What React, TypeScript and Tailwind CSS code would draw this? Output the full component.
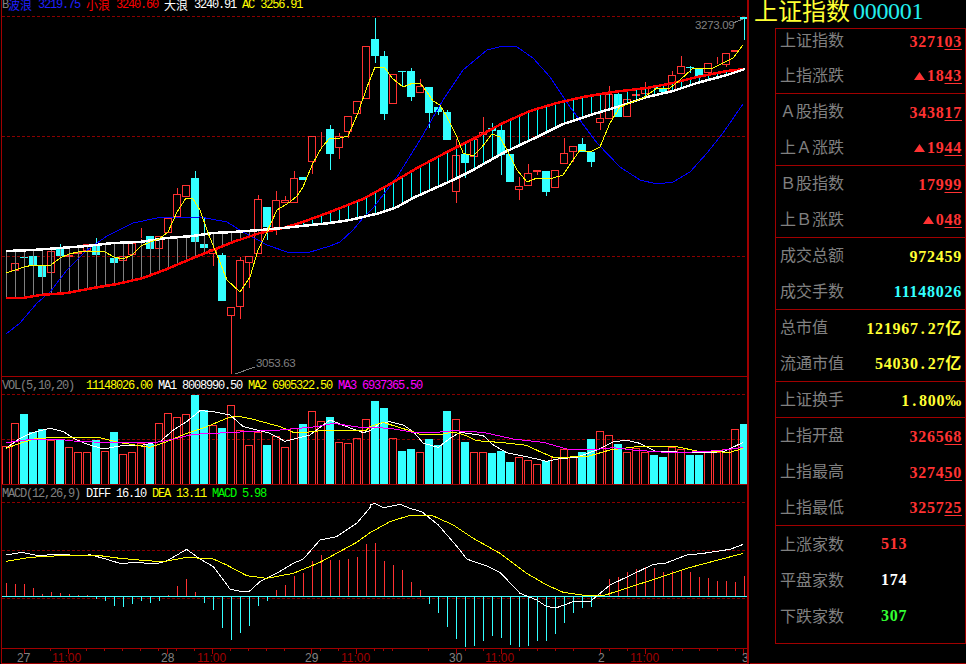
const UP = "#ff3232";
const DOWN = "#33ffff";
const GRID = "#8a0000";

type Pt = [number, number];
type Candle = { top: number; bot: number; wt?: number; wb?: number; down?: boolean };

const colX = (i: number) => 6 + 9 * i;

const r = (top: number, bot: number, wt?: number, wb?: number): Candle => ({ top, bot, wt, wb });
const c = (top: number, bot: number, wt?: number, wb?: number): Candle => ({ top, bot, wt, wb, down: true });

const candles: Candle[] = [
  r(271, 272), r(263, 271), c(257, 258), c(256, 265), c(265, 277), r(251, 273), c(249, 256, 244), r(255, 257), r(252, 254), r(244, 251),
  c(244, 255, 238), r(255, 256), c(258, 263), r(256, 261), r(243, 255), r(238, 239, 228, 240), c(236, 249), r(236, 249), r(218, 233), r(194, 217, 188),
  r(185, 197), c(178, 242, 171), c(244, 248, 217), r(249, 254, 249, 266), c(255, 301, 253), r(307, 316, 307, 374), r(260, 307, 257, 319), r(256, 263, 256, 288), r(199, 254, 195), c(207, 227, 207, 240),
  r(200, 228, 191, 235), r(200, 203, 196), r(178, 203, 171), c(177, 180), r(136, 162, 136, 174), r(131, 132, 131, 148), c(129, 154, 125, 170), r(136, 148, 133, 159), r(116, 132, 116, 138), r(101, 114),
  r(46, 99), c(39, 56, 18, 63), c(56, 114, 51, 120), r(74, 104), c(71, 72, 71, 87), c(71, 97, 68, 101), r(86, 93, 79), c(87, 113, 87, 128), c(107, 112, 107, 115), c(112, 140, 110),
  r(155, 192, 139, 203), c(154, 163, 154, 178), r(139, 157, 139, 169), r(132, 135, 117, 147), c(128, 131, 123, 160), c(130, 155, 130, 175), c(154, 182), r(186, 190, 177, 200), r(173, 186, 164), r(170, 172, 170, 175),
  c(171, 192, 171, 196), r(170, 188), r(153, 164, 138), r(146, 152, 146, 162), c(144, 152, 138), c(152, 162, 152, 167), r(118, 123, 113, 130), r(94, 119, 86), c(94, 117), r(99, 117),
  r(94, 96), r(88, 94, 82), c(86, 88), c(88, 92), r(75, 91, 71), r(66, 74, 56), c(67, 68, 66, 73), c(68, 76), r(63, 73), r(64, 65, 57),
  r(53, 65, 53, 67), r(50, 52), c(17, 19, 17, 40),
];

const volTops = [
  446, 423, 414, 432, 429, 440, 439, 447, 452, 452, 440, 451, 432, 454, 452, 443, 444, 423, 413, 417, 414,
  395, 410, 425, 428, 405, 430, 445, 432, 445, 436, 447, 428, 424, 411, 421, 417, 442, 443, 438, 419,
  401, 408, 438, 451, 449, 452, 439, 445, 411, 419, 442, 452, 452, 453, 451, 462, 457, 460, 464, 461,
  457, 449, 457, 452, 439, 431, 435, 444, 452, 448, 452, 455, 457, 447, 449, 455, 455, 452, 452, 449, 429, 424,
];

const macdBars = [
  583, 584, 584, 588, 594, 592, 593, 594, 595, 595, 599, 601, 606, 607, 604, 601, 603, 601, 595, 586, 579,
  592, 603, 610, 628, 640, 633, 626, 606, 601, 590, 585, 576, 573, 561, 555, 560, 560, 559, 557, 544,
  543, 561, 565, 570, 582, 590, 604, 613, 627, 639, 647, 646, 641, 636, 638, 645, 647, 646, 641, 641,
  634, 623, 613, 608, 607, 593, 579, 577, 572, 569, 567, 568, 572, 571, 570, 572, 577, 578, 581, 581, 582, 576,
];

const whiteBand: Pt[] = [[6, 251], [33, 250], [60, 248], [87, 246], [113, 243], [140, 242], [167, 238], [193, 236], [213, 233], [233, 232], [260, 230], [283, 228], [330, 223], [350, 220], [380, 213], [397, 207], [413, 198], [453, 180], [473, 170], [503, 153], [537, 137], [563, 124], [597, 113], [617, 107], [647, 97], [673, 91], [697, 83], [727, 75], [745, 69]];
const redBand: Pt[] = [[6, 298], [23, 298], [40, 295], [67, 293], [93, 288], [117, 284], [143, 278], [167, 269], [193, 258], [213, 250], [233, 242], [260, 233], [283, 228], [300, 223], [330, 212], [363, 199], [390, 184], [417, 168], [447, 152], [477, 137], [503, 123], [530, 111], [557, 103], [583, 97], [613, 92], [647, 88], [673, 83], [697, 77], [727, 71], [745, 69]];
const blueWave: Pt[] = [[6, 334], [20, 323], [37, 303], [50, 292], [67, 270], [87, 250], [107, 236], [133, 223], [157, 218], [200, 217], [227, 222], [243, 232], [267, 245], [287, 252], [307, 253], [330, 246], [340, 242], [353, 230], [363, 218], [373, 208], [397, 177], [420, 140], [443, 100], [463, 70], [487, 50], [503, 46], [517, 47], [533, 58], [550, 77], [570, 107], [597, 143], [620, 167], [640, 180], [657, 184], [673, 182], [690, 172], [707, 153], [723, 133], [743, 104]];
const acLine: Pt[] = [[6, 273], [15, 270], [24, 267], [33, 265], [42, 266], [51, 265], [60, 258], [69, 254], [78, 252], [87, 251], [96, 251], [105, 252], [114, 257], [123, 259], [132, 255], [141, 246], [150, 242], [159, 239], [168, 232], [177, 212], [186, 198], [193, 199], [200, 210], [208, 233], [217, 255], [227, 280], [240, 292], [250, 277], [258, 250], [267, 232], [277, 210], [290, 202], [297, 196], [303, 187], [313, 163], [322, 147], [330, 138], [340, 138], [348, 136], [358, 113], [367, 87], [375, 67], [385, 68], [392, 78], [403, 87], [413, 83], [420, 83], [427, 92], [433, 101], [440, 105], [447, 117], [457, 137], [463, 153], [473, 156], [482, 147], [492, 134], [500, 137], [508, 152], [517, 170], [527, 182], [537, 178], [553, 178], [563, 175], [573, 160], [580, 150], [590, 152], [600, 147], [610, 123], [620, 107], [630, 103], [643, 98], [657, 88], [670, 88], [680, 80], [692, 69], [713, 68], [733, 58], [743, 45]];

// traced from 3x crops, left half and right half
const crop = (ox: number, oy: number, list: Pt[]): Pt[] => list.map(([x, y]) => [x / 3 + ox, y / 3 + oy]);

const volWhite = [...crop(0, 370, [[18, 235], [60, 205], [100, 187], [150, 175], [190, 185], [220, 205], [260, 222], [310, 237], [360, 228], [430, 225], [480, 215], [520, 180], [560, 155], [600, 122], [640, 125], [690, 135], [730, 170], [770, 180], [810, 190], [855, 214], [890, 205], [930, 195], [990, 150], [1040, 170], [1090, 188]]), ...crop(370, 370, [[0, 182], [30, 160], [60, 155], [100, 165], [130, 185], [160, 220], [205, 232], [240, 205], [270, 187], [340, 197], [370, 225], [410, 248], [470, 260], [530, 274], [570, 266], [620, 262], [680, 240], [730, 215], [770, 211], [810, 220], [860, 245], [920, 246], [1000, 248], [1060, 245], [1120, 217]])];
const volYellow = [...crop(0, 370, [[18, 235], [60, 220], [110, 205], [170, 203], [300, 203], [360, 218], [450, 232], [500, 215], [560, 190], [620, 170], [680, 145], [710, 138], [760, 148], [840, 170], [880, 187], [920, 187], [980, 180], [1050, 183], [1100, 180]]), ...crop(370, 370, [[0, 170], [40, 157], [80, 170], [130, 185], [150, 193], [215, 193], [250, 186], [290, 197], [320, 212], [400, 218], [470, 226], [510, 245], [550, 262], [650, 260], [720, 240], [800, 230], [920, 230], [980, 243], [1080, 247], [1120, 235]])];
const volPink = [...crop(0, 370, [[18, 218], [100, 207], [170, 207], [220, 213], [320, 218], [460, 218], [500, 212], [580, 193], [700, 187], [840, 180], [950, 170], [1000, 160], [1080, 172]]), ...crop(370, 370, [[0, 172], [60, 175], [130, 187], [190, 188], [250, 182], [340, 187], [430, 207], [520, 217], [590, 237], [680, 238], [730, 233], [790, 240], [900, 248], [1000, 245], [1060, 240], [1120, 232]])];

const macdWhite = [...crop(0, 485, [[18, 210], [65, 202], [120, 213], [150, 209], [190, 209], [250, 212], [270, 209], [310, 220], [360, 235], [410, 233], [470, 236], [500, 228], [560, 193], [600, 222], [640, 245], [690, 312], [720, 319], [748, 319], [780, 290], [830, 265], [880, 235], [910, 222], [960, 165], [1010, 155], [1070, 115], [1110, 68]]), ...crop(370, 485, [[0, 60], [15, 55], [40, 68], [90, 58], [120, 70], [155, 80], [205, 120], [270, 195], [290, 222], [350, 243], [390, 262], [450, 325], [500, 345], [530, 365], [560, 368], [610, 350], [660, 350], [690, 325], [720, 300], [800, 262], [850, 238], [885, 235], [950, 210], [1000, 205], [1080, 193], [1120, 178]])];
const macdYellow = [...crop(0, 485, [[18, 229], [90, 217], [180, 212], [300, 212], [360, 220], [440, 227], [490, 230], [560, 217], [640, 222], [680, 240], [740, 272], [800, 280], [880, 265], [960, 232], [1070, 172]]), ...crop(370, 485, [[0, 143], [60, 110], [120, 91], [185, 91], [250, 120], [310, 160], [390, 205], [470, 265], [530, 300], [580, 322], [650, 332], [700, 332], [830, 290], [950, 250], [1120, 205]])];

const majorTicks = [24, 68, 167, 212, 311, 356, 456, 501, 600, 645, 743];
const minorTicks = [50, 86, 104, 122, 140, 158, 176, 194, 230, 248, 266, 284, 320, 338, 374, 383, 392, 428, 465, 483, 519, 537, 555, 573, 609, 627, 672, 682, 699, 717, 735];
const axisLabels = [
  { x: 17, t: "27" }, { x: 52, t: "11:00", hour: true }, { x: 161, t: "28" }, { x: 197, t: "11:00", hour: true },
  { x: 305, t: "29" }, { x: 341, t: "11:00", hour: true }, { x: 449, t: "30" }, { x: 485, t: "11:00", hour: true },
  { x: 598, t: "2" }, { x: 630, t: "11:00", hour: true }, { x: 742, t: "3" },
];

function yAt(line: Pt[], x: number) {
  for (let k = 1; k < line.length; k++) {
    const [x0, y0] = line[k - 1];
    const [x1, y1] = line[k];
    if (x <= x1) return y0 + ((y1 - y0) * (x - x0)) / (x1 - x0);
  }
  return line[line.length - 1][1];
}

function Line({ pts, color, w = 1 }: { pts: Pt[]; color: string; w?: number }) {
  return <polyline points={pts.map((p) => p.join(",")).join(" ")} fill="none" stroke={color} strokeWidth={w} />;
}

function Dash({ y }: { y: number }) {
  return <line x1={2} x2={747} y1={y + 0.5} y2={y + 0.5} stroke={GRID} strokeDasharray="3 2" />;
}

function Vbar({ x, y0, y1, color }: { x: number; y0: number; y1: number; color: string }) {
  return <line x1={x + 0.5} x2={x + 0.5} y1={y0} y2={y1} stroke={color} />;
}

function MainChart() {
  return (
    <svg width={745} height={376} viewBox="2 0 745 376" shapeRendering="crispEdges" className="block">
      <Dash y={16} />
      <Dash y={136} />
      <Dash y={256} />
      {candles.map((k, i) => {
        const x = colX(i);
        const color = k.down ? DOWN : UP;
        return (
          <g key={i}>
            {k.wt !== undefined && k.wt < k.top && <Vbar x={x} y0={k.wt} y1={k.top} color={color} />}
            {k.wb !== undefined && k.wb > k.bot && <Vbar x={x} y0={k.bot} y1={k.wb} color={color} />}
            {k.down ? (
              <rect x={x - 4} y={k.top} width={8} height={k.bot - k.top} fill={DOWN} />
            ) : (
              <rect x={x - 3.5} y={k.top + 0.5} width={7} height={Math.max(k.bot - k.top - 1, 0)} fill="none" stroke={UP} />
            )}
          </g>
        );
      })}
      {candles.map((_, i) => {
        const x = colX(i);
        const a = yAt(whiteBand, x);
        const b = yAt(redBand, x);
        return <Vbar key={i} x={x} y0={a} y1={b} color={a < b ? "#808080" : "#00ffff"} />;
      })}
      <Line pts={blueWave} color="#0000ff" />
      <Line pts={redBand} color="#ff0000" w={2.5} />
      <Line pts={whiteBand} color="#ffffff" w={2.5} />
      <Line pts={acLine} color="#ffff00" />
      <polyline points="235,374 255,367" fill="none" stroke="#808080" />
      <polyline points="733,23 743,19" fill="none" stroke="#808080" />
      <text x={256} y={367} fill="#808080" className="font-['Liberation_Sans'] text-[11.5px] tracking-[-0.3px]">3053.63</text>
      <text x={695} y={29} fill="#808080" className="font-['Liberation_Sans'] text-[11.5px] tracking-[-0.3px]">3273.09</text>
    </svg>
  );
}

function VolChart() {
  return (
    <svg width={745} height={107} viewBox="2 377 745 107" shapeRendering="crispEdges" className="block">
      <Dash y={394} />
      <Dash y={439} />
      {volTops.map((top, i) => {
        const x = colX(i);
        return candles[i].down ? (
          <rect key={i} x={x - 4} y={top} width={8} height={484 - top} fill={DOWN} />
        ) : (
          <rect key={i} x={x - 3.5} y={top + 0.5} width={7} height={483.5 - top} fill="none" stroke={UP} />
        );
      })}
      <Line pts={volWhite} color="#ffffff" />
      <Line pts={volYellow} color="#ffff00" />
      <Line pts={volPink} color="#ff00ff" />
    </svg>
  );
}

function MacdChart() {
  return (
    <svg width={745} height={163} viewBox="2 485 745 163" shapeRendering="crispEdges" className="block">
      <Dash y={502} />
      <Dash y={550} />
      <Dash y={598} />
      {macdBars.map((y, i) => (
        <Vbar key={i} x={colX(i)} y0={y} y1={596} color={y < 596 ? UP : DOWN} />
      ))}
      <line x1={2} x2={747} y1={596.5} y2={596.5} stroke="#40ffff" />
      <Line pts={macdWhite} color="#ffffff" />
      <Line pts={macdYellow} color="#ffff00" />
    </svg>
  );
}

function TimeAxis() {
  return (
    <svg width={745} height={14} viewBox="2 649 745 14" shapeRendering="crispEdges" className="block">
      {majorTicks.map((x) => (
        <Vbar key={x} x={x} y0={649} y1={654} color="#aa0000" />
      ))}
      {minorTicks.map((x) => (
        <Vbar key={x} x={x} y0={649} y1={651} color="#aa0000" />
      ))}
      {axisLabels.map((l) => (
        <text key={l.x} x={l.x} y={662} fill={l.hour ? "#a00000" : "#808080"} className="font-['Liberation_Sans'] text-[12px]">
          {l.t}
        </text>
      ))}
    </svg>
  );
}

function Num({ children, className = "" }: { children: React.ReactNode; className?: string }) {
  return <span className={`font-['Liberation_Mono'] text-[12px] leading-[10px] tracking-[-1.2px] ${className}`}>{children}</span>;
}

function Cjk({ children, className = "" }: { children: React.ReactNode; className?: string }) {
  return <span className={`font-['Noto_Sans_CJK_SC'] text-[12px] leading-[10px] ${className}`}>{children}</span>;
}

function Triangle() {
  return (
    <svg width={11} height={8} viewBox="0 0 11 8" className="mr-[2px] inline-block">
      <polygon points="5.5,0 11,8 0,8" fill={UP} />
    </svg>
  );
}

function Row({ label, children, className = "" }: { label: string; children: React.ReactNode; className?: string }) {
  return (
    <div className="flex flex-1 items-center justify-between pl-1 pr-[3px]">
      <span className="mb-[3px] font-['Noto_Sans_CJK_SC'] text-[16px] leading-5 text-[#808080]">{label}</span>
      <span className={`mt-[2px] flex items-center [font-family:'Liberation_Serif','Noto_Sans_CJK_SC',serif] text-[16px] font-bold leading-5 tracking-[0.75px] ${className}`}>
        {children}
      </span>
    </div>
  );
}

function CountRow({ label, value, color }: { label: string; value: string; color: string }) {
  return (
    <div className="flex h-9 items-center pl-1">
      <span className="mb-[3px] w-[101px] font-['Noto_Sans_CJK_SC'] text-[16px] leading-5 text-[#808080]">{label}</span>
      <span className={`font-['Liberation_Serif'] text-[16px] font-bold leading-5 tracking-[0.75px] ${color}`}>{value}</span>
    </div>
  );
}

function Tail({ children }: { children: React.ReactNode }) {
  return <span className="underline decoration-1 underline-offset-2">{children}</span>;
}

// the bitmap font has a full width dot
function Dot() {
  return <span className="w-[9px] text-center">.</span>;
}

export default function App() {
  return (
    <div className="flex h-[664px] w-[966px] overflow-hidden bg-black">
      {/* chart column */}
      <div className="ml-px h-[664px] w-[748px] shrink-0 border-r-2 border-b border-l border-[#a00000]">
        <div className="relative h-[376px]">
          <MainChart />
          <div className="absolute left-0 top-0 flex gap-[6px] whitespace-nowrap">
            <Num className="text-[#808080]">B</Num>
            <div className="-ml-[6px] flex gap-[6px] text-[#2020ff]"><Cjk>波浪</Cjk><Num>3219.75</Num></div>
            <div className="flex gap-[6px] text-[#ff0000]"><Cjk>小浪</Cjk><Num>3240.60</Num></div>
            <div className="flex gap-[6px] text-white"><Cjk>大浪</Cjk><Num>3240.91</Num></div>
            <div className="flex gap-[6px] text-[#ffff00]"><Num>AC</Num><Num>3256.91</Num></div>
          </div>
        </div>
        <div className="relative border-t border-[#a00000]">
          <VolChart />
          <div className="absolute left-0 top-[4px] flex gap-[6px] whitespace-nowrap">
            <Num className="w-[78px] text-[#808080]">VOL(5,10,20)</Num>
            <Num className="text-[#ffff00]">11148026.00</Num>
            <div className="flex gap-[6px] text-white"><Num>MA1</Num><Num>8008990.50</Num></div>
            <div className="flex gap-[6px] text-[#ffff00]"><Num>MA2</Num><Num>6905322.50</Num></div>
            <div className="flex gap-[6px] text-[#ff00ff]"><Num>MA3</Num><Num>6937365.50</Num></div>
          </div>
        </div>
        <div className="relative border-t border-[#a00000]">
          <MacdChart />
          <div className="absolute left-0 top-[4px] flex gap-[6px] whitespace-nowrap">
            <Num className="w-[78px] text-[#808080]">MACD(12,26,9)</Num>
            <div className="flex gap-[6px] text-white"><Num>DIFF</Num><Num>16.10</Num></div>
            <div className="flex gap-[6px] text-[#ffff00]"><Num>DEA</Num><Num>13.11</Num></div>
            <div className="flex gap-[6px] text-[#00ff00]"><Num>MACD</Num><Num>5.98</Num></div>
          </div>
        </div>
        <div className="border-t border-[#a00000]">
          <TimeAxis />
        </div>
      </div>

      {/* quote column */}
      <div className="ml-px h-[664px] flex-1 border-b border-[#a00000]">
        <div className="flex h-[28px] items-start whitespace-nowrap pl-[4px]">
          <span className="font-['Noto_Sans_CJK_SC'] text-[24px] leading-[20px] text-[#ffff33]">上证指数</span>
          <span className="ml-[3px] font-['Liberation_Serif'] text-[24px] leading-[23px] tracking-[-0.3px] text-[#22eeee]">000001</span>
        </div>
        <div className="ml-[25px] flex h-[616px] w-[191px] flex-col border border-[#a00000]">
          <div className="flex h-[64px] flex-col">
            <div className="flex h-[28px] flex-col pb-2">
              <Row label="上证指数" className="text-[#ff3232]">3271<Tail>03</Tail></Row>
            </div>
            <div className="flex h-[36px] flex-col">
              <Row label="上指涨跌" className="text-[#ff3232]"><Triangle />18<Tail>43</Tail></Row>
            </div>
          </div>
          <div className="flex h-[72px] flex-col border-t border-[#a00000]">
            <Row label="Ａ股指数" className="text-[#ff3232]">3438<Tail>17</Tail></Row>
            <Row label="上Ａ涨跌" className="text-[#ff3232]"><Triangle />19<Tail>44</Tail></Row>
          </div>
          <div className="flex h-[72px] flex-col border-t border-[#a00000]">
            <Row label="Ｂ股指数" className="text-[#ff3232]">179<Tail>99</Tail></Row>
            <Row label="上Ｂ涨跌" className="text-[#ff3232]"><Triangle />0<Tail>48</Tail></Row>
          </div>
          <div className="flex h-[72px] flex-col border-t border-[#a00000]">
            <Row label="成交总额" className="text-[#ffff33]">972459</Row>
            <Row label="成交手数" className="text-[#33ffff]">11148026</Row>
          </div>
          <div className="flex h-[72px] flex-col border-t border-[#a00000]">
            <Row label="总市值" className="text-[#ffff33]">121967<Dot />27亿</Row>
            <Row label="流通市值" className="text-[#ffff33]">54030<Dot />27亿</Row>
          </div>
          <div className="flex h-[36px] flex-col border-t border-[#a00000]">
            <Row label="上证换手" className="text-[#ffff33]">1<Dot />800‰</Row>
          </div>
          <div className="flex h-[108px] flex-col border-t border-[#a00000]">
            <Row label="上指开盘" className="text-[#ff3232]">3265<Tail>68</Tail></Row>
            <Row label="上指最高" className="text-[#ff3232]">3274<Tail>50</Tail></Row>
            <Row label="上指最低" className="text-[#ff3232]">3257<Tail>25</Tail></Row>
          </div>
          <div className="flex-1 border-t border-[#a00000]">
            <CountRow label="上涨家数" value="513" color="text-[#ff3232]" />
            <CountRow label="平盘家数" value="174" color="text-white" />
            <CountRow label="下跌家数" value="307" color="text-[#33ff33]" />
          </div>
        </div>
      </div>
    </div>
  );
}
